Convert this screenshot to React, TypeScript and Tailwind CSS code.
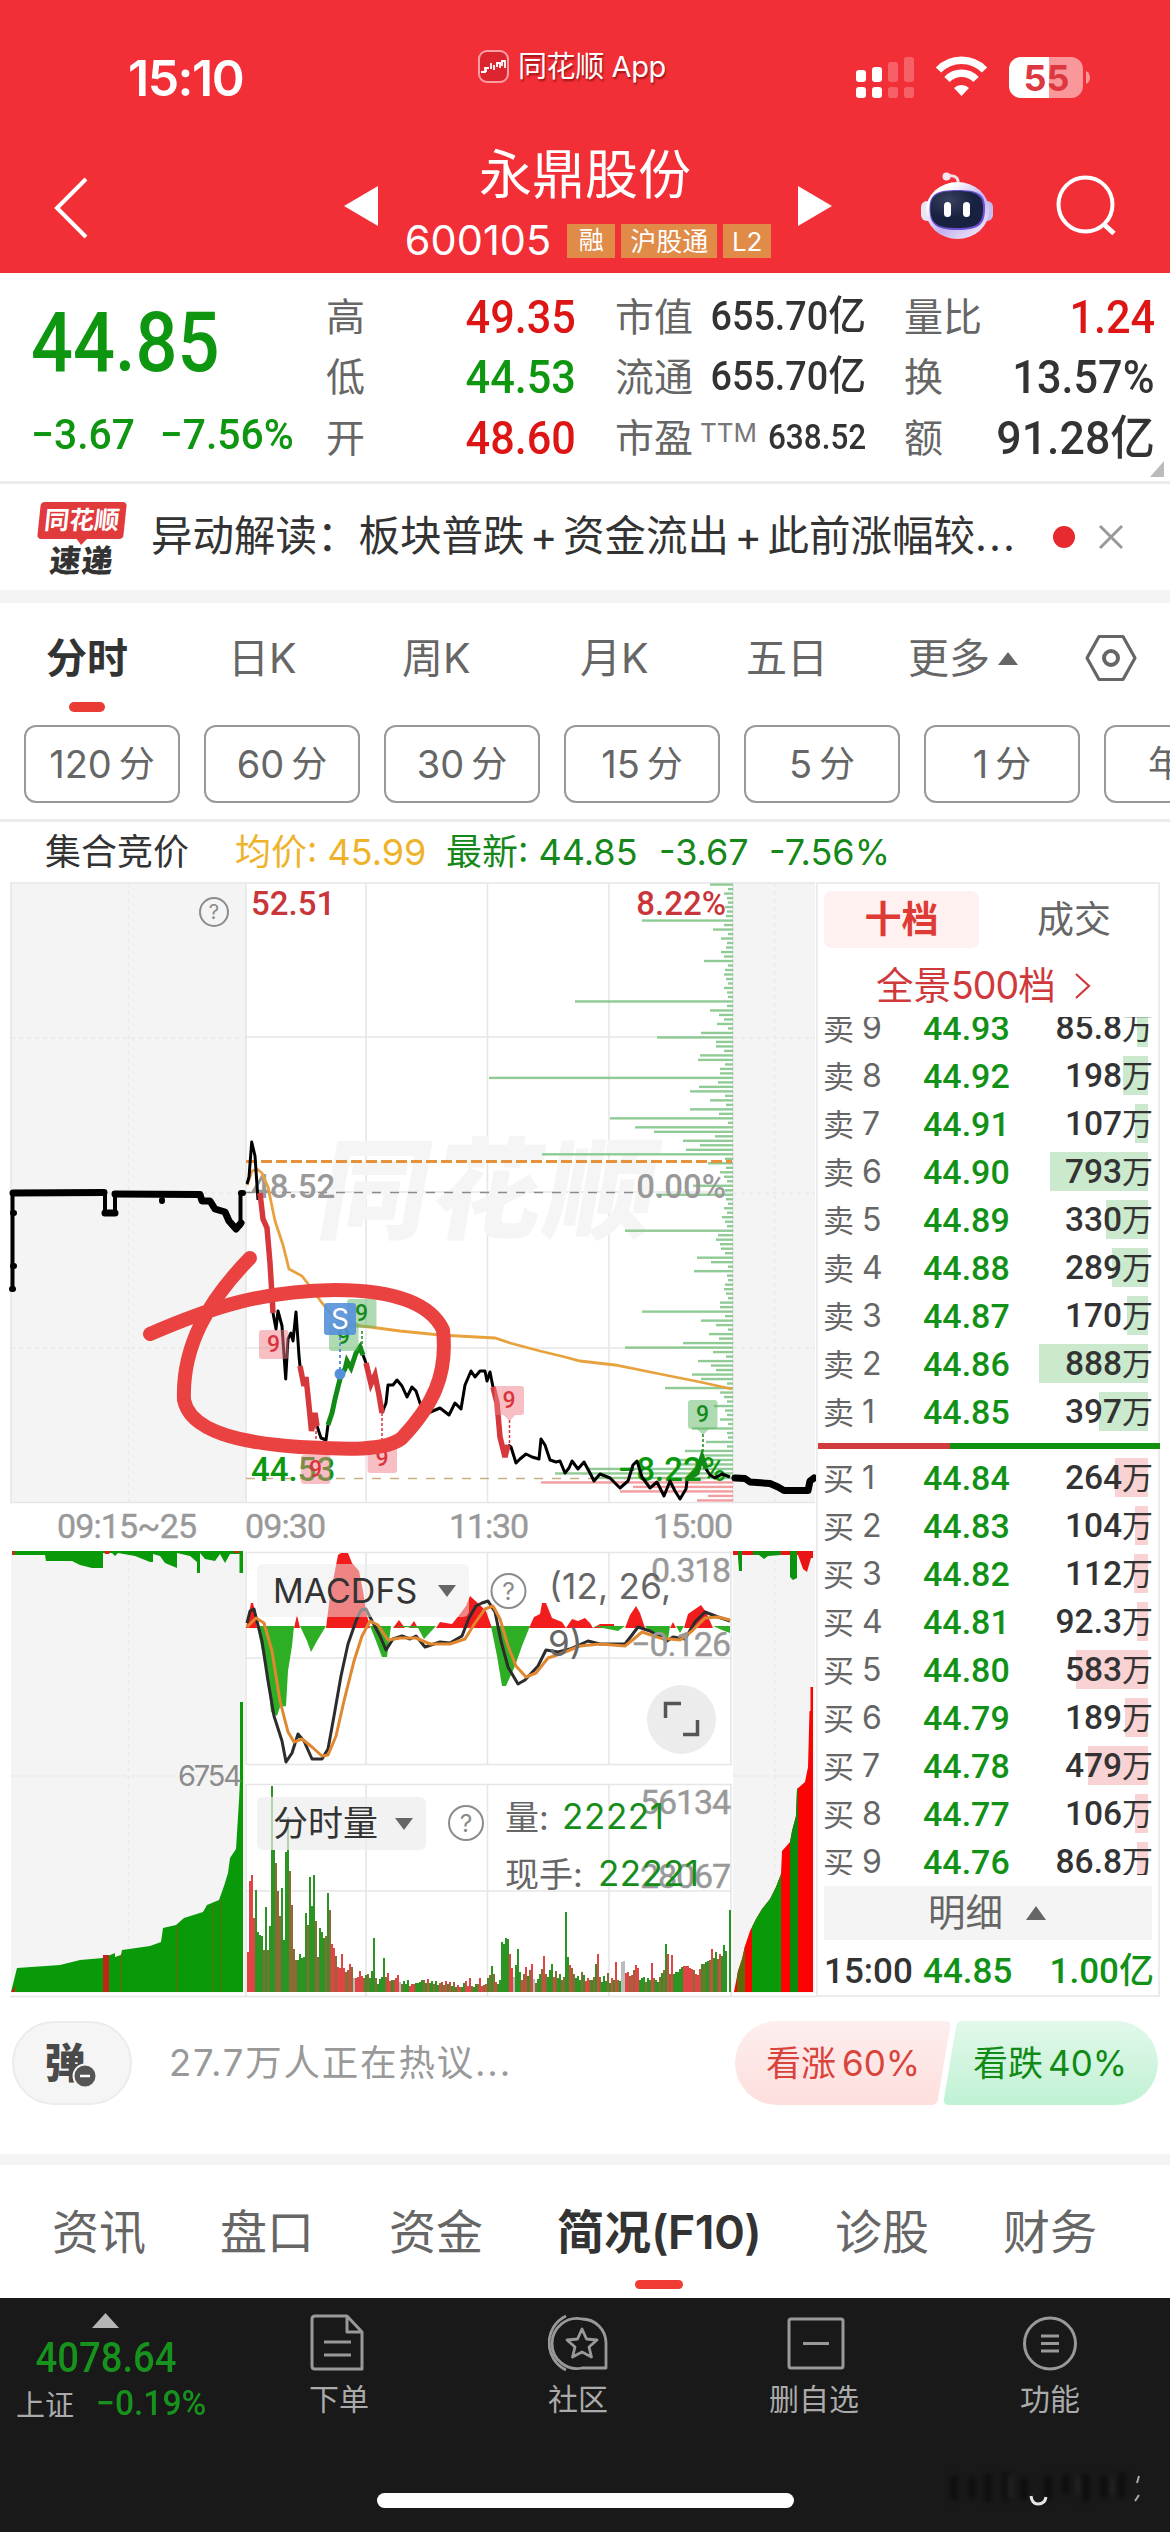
import React from 'react';

const NUM = "font-['Roboto','Noto_Sans_CJK_SC',sans-serif] font-medium";

type Level = { label: string; n: number; price: string; vol: string; bar: number };

const SELLS: Level[] = [
  { label: '卖', n: 9, price: '44.93', vol: '85.8万', bar: 11 },
  { label: '卖', n: 8, price: '44.92', vol: '198万', bar: 25 },
  { label: '卖', n: 7, price: '44.91', vol: '107万', bar: 13 },
  { label: '卖', n: 6, price: '44.90', vol: '793万', bar: 98 },
  { label: '卖', n: 5, price: '44.89', vol: '330万', bar: 42 },
  { label: '卖', n: 4, price: '44.88', vol: '289万', bar: 36 },
  { label: '卖', n: 3, price: '44.87', vol: '170万', bar: 21 },
  { label: '卖', n: 2, price: '44.86', vol: '888万', bar: 109 },
  { label: '卖', n: 1, price: '44.85', vol: '397万', bar: 49 },
];

const BUYS: Level[] = [
  { label: '买', n: 1, price: '44.84', vol: '264万', bar: 33 },
  { label: '买', n: 2, price: '44.83', vol: '104万', bar: 13 },
  { label: '买', n: 3, price: '44.82', vol: '112万', bar: 14 },
  { label: '买', n: 4, price: '44.81', vol: '92.3万', bar: 11 },
  { label: '买', n: 5, price: '44.80', vol: '583万', bar: 72 },
  { label: '买', n: 6, price: '44.79', vol: '189万', bar: 23 },
  { label: '买', n: 7, price: '44.78', vol: '479万', bar: 60 },
  { label: '买', n: 8, price: '44.77', vol: '106万', bar: 13 },
  { label: '买', n: 9, price: '44.76', vol: '86.8万', bar: 11 },
];

// volume profile, row index -> bar length
const PROFILE: Record<number, number> = {
  0: 23, 8: 91, 10: 20, 12: 12, 15: 12, 17: 29, 20: 9, 26: 158, 28: 23, 29: 14, 31: 16, 33: 32, 34: 76,
  35: 17, 36: 17, 38: 33, 39: 35, 41: 13, 42: 13, 43: 244, 44: 15, 45: 34, 46: 43, 48: 23, 50: 43, 51: 14,
  52: 123, 54: 98, 55: 79, 56: 18, 57: 50, 58: 33, 59: 47, 60: 191, 62: 25, 64: 13, 67: 40, 69: 77, 74: 11,
  77: 108, 78: 15, 79: 17, 80: 13, 81: 12, 83: 36, 84: 22, 86: 39, 90: 9, 93: 13, 94: 13, 95: 91, 97: 32,
  98: 17, 100: 24, 101: 14, 102: 50, 103: 108, 104: 20, 106: 35, 107: 22, 108: 17, 109: 41, 110: 32,
  112: 68, 113: 13, 116: 19, 119: 13, 121: 41, 124: 27, 126: 48, 127: 30, 128: 60, 129: 57, 130: 147,
  131: 178, 132: 140, 133: 192, 134: 100, 135: 113, 136: 25, 137: 36,
};
const SMALL = [7, 5, 9, 6, 5, 8, 6];

// one entry per minute: height + colour (r red, g green, m mixed, w grey)
const VOLUME = (
  '40r 111r 117r 74r 102g 60g 57g 56g 42m 85g 42m 66g 206g 142g 129m 101m 76m 104g 52g 140g 175g 121m 87m 43m 32m 32g 38g 34g 35g ' +
  '79g 67m 115g 86g 117g 71m 35m 64g 60g 54g 56m 99g 82m 48r 44r 36m 25r 24r 38r 24r 20m 22m 28r 25m 14w 14r 15r 21r 16r 14m 17g ' +
  '18m 14g 21g 54g 14m 8g 13g 15g 34g 15m 19r 11r 12g 12m 14r 17r 10w 8m 11g 8g 12g 6r 8r 8r 9g 9g 10g 12g 12m 9g 13r 9g 11g 8m 11g ' +
  '7g 9r 10m 7m 11r 8g 10r 6g 10m 5g 7r 5r 5g 9g 11r 6r 14r 6m 5g 8g 8m 14r 6r 7m 8r 14g 17m 26g 18m 10r 8g 12g 50g 48g 54g 53g 38r ' +
  '24r 15w 27g 43g 20g 12r 18m 25r 16g 22m 28r 13w 9m 13g 18g 23m 36r 18m 15g 22g 28g 15r 21m 14g 18g 12m 15m 80g 35g 27r 24m 18m ' +
  '14g 16g 12g 20m 17g 11r 14r 12m 12g 15m 28g 38r 15m 10g 16g 11g 19m 9g 14r 12g 30r 12m 11g 30w 31w 19r 20r 16m 17r 22m 27r 24r ' +
  '12g 14g 15g 10m 14g 12g 29r 14m 12g 10g 15m 19g 22m 48g 38r 18m 37r 18g 20g 20g 23g 25g 26r 26r 26r 24r 23r 22m 18r 17r 23r 28g ' +
  '28m 30g 31g 32m 43r 34g 40g 33m 38r 36g 47g 41g'
).split(' ');

const VOL_COLOR: Record<string, string> = { r: '#df4545', g: '#2b9422', m: '#8b6a35', w: '#bbbbbb' };

const Tri = ({ up = false, color = '#666', w = 18, h = 12 }: { up?: boolean; color?: string; w?: number; h?: number }) => (
  <svg width={w} height={h} viewBox="0 0 18 12" preserveAspectRatio="none">
    <path d={up ? 'M9 0L18 12H0Z' : 'M0 0H18L9 12Z'} fill={color} />
  </svg>
);

const Help = ({ cx, cy, r }: { cx: number; cy: number; r: number }) => (
  <g>
    <circle cx={cx} cy={cy} r={r} fill="none" stroke="#8c8c8c" strokeWidth="2" />
    <text x={cx} y={cy + r * 0.52} textAnchor="middle" fontSize={r * 1.45} fill="#8c8c8c" fontFamily="Inter">?</text>
  </g>
);

const Flag = ({ x, y, green = false, tail }: { x: number; y: number; green?: boolean; tail?: number }) => (
  <g>
    <rect x={x} y={y} width="29.5" height="29" rx="3" fill={green ? '#5fb865' : '#f08088'} opacity="0.5" />
    {tail && <path d={`M${x + 9} ${y + 29}h12l-6 6z`} fill={green ? '#5fb865' : '#f08088'} opacity="0.5" />}
    <text x={x + 14.5} y={y + 22} textAnchor="middle" fontSize="23" fontWeight="500" fill={green ? '#168a1c' : '#d9333c'} fontFamily="Roboto">9</text>
    {tail && <path d={`M${x + 15} ${y + 34}V${tail}`} stroke={green ? '#168a1c' : '#d9333c'} strokeWidth="1.5" strokeDasharray="3 2" />}
  </g>
);

const Header = () => (
  <header className="flex h-[273px] flex-col bg-[#f22f37] text-white">
    <div className="flex h-[140px] items-start pl-[128px] pr-[80px]">
      <div className="mt-[51px] w-[350px] text-[50px] font-semibold leading-[54px] tracking-[-1.5px]">15:10</div>
      <div className="mt-[50px] flex items-center gap-[9px]">
        <svg width="31" height="34" viewBox="0 0 31 34">
          <rect x="1" y="1" width="29" height="31" rx="8" fill="#dd2530" stroke="#ff9ea2" strokeWidth="2" />
          <path d="M3 22h4v-5M8 22v-4h3M13 19v-6M16 20v-5M19 17v-4h3v5M24 16v-5h3v7" stroke="#fff" strokeWidth="1.8" fill="none" />
        </svg>
        <span className="text-[29px] leading-[34px] tracking-[-0.4px] [text-shadow:1px_2px_2px_rgba(90,0,0,.6)]">同花顺 App</span>
      </div>
      <svg className="ml-auto mt-[55px]" width="236" height="46" viewBox="0 0 236 46">
        <g fill="#fff">
          <rect x="2" y="15" width="10" height="12" rx="3" />
          <rect x="18" y="12" width="10" height="15" rx="3" />
          <rect x="2" y="32" width="10" height="11" rx="3" />
          <rect x="18" y="32" width="10" height="11" rx="3" />
          <g opacity="0.24">
            <rect x="34" y="7" width="10" height="20" rx="3" />
            <rect x="50" y="2" width="10" height="25" rx="3" />
            <rect x="34" y="32" width="10" height="11" rx="3" />
            <rect x="50" y="32" width="10" height="11" rx="3" />
          </g>
        </g>
        <g fill="none" stroke="#fff" strokeWidth="7.5">
          <path d="M84.500 15a32 32 0 0 1 46 0" />
          <path d="M93 24.500a20 20 0 0 1 29 0" />
        </g>
        <path d="M100 33a11 11 0 0 1 15 0L107.500 41z" fill="#fff" />
        <path d="M167 2h28v41h-28a12 12 0 0 1-12-12V14a12 12 0 0 1 12-12z" fill="#fff" />
        <path d="M195 2h22a12 12 0 0 1 12 12v17a12 12 0 0 1-12 12h-22z" fill="#fff" opacity="0.5" />
        <path d="M232 16c3 1.500 4 4 4 6.500s-1 5-4 6.500z" fill="#fff" opacity="0.5" />
        <text x="192.500" y="35.500" textAnchor="middle" fontSize="36" fontWeight="700" fill="#dd3740" fontFamily="Inter">55</text>
      </svg>
    </div>
    <div className="flex h-[133px] items-start">
      <svg className="ml-[53px] mt-[36px]" width="36" height="64" viewBox="0 0 36 64">
        <path d="M33 3L4 32L33 61" fill="none" stroke="#fff" strokeWidth="4" />
      </svg>
      <svg className="ml-[255px] mt-[46px]" width="34" height="40" viewBox="0 0 34 40"><path d="M0 20L34 0V40Z" fill="#fff" /></svg>
      <div className="flex w-[420px] flex-col items-center pr-[6px]">
        <div className="mt-[6px] text-[53px] leading-[58px]">永鼎股份</div>
        <div className="mt-[18px] flex h-[38px] items-center gap-[6px] pl-[6px]">
          <span className="mr-[10px] text-[41.5px] leading-none">600105</span>
          <span className="flex h-[34px] w-[48px] items-center justify-center bg-[#e08b48] text-[25px]">融</span>
          <span className="flex h-[34px] w-[96px] items-center justify-center bg-[#e08b48] text-[26px]">沪股通</span>
          <span className="flex h-[34px] w-[48px] items-center justify-center bg-[#e08b48] text-[26px]">L2</span>
        </div>
      </div>
      <svg className="mt-[46px]" width="34" height="40" viewBox="0 0 34 40"><path d="M34 20L0 0V40Z" fill="#fff" /></svg>
      <svg className="ml-[88px] mt-[30px]" width="76" height="72" viewBox="0 0 76 72">
        <defs>
          <linearGradient id="bot" x1="0" y1="0.1" x2="0.8" y2="1">
            <stop offset="0.2" stopColor="#fff" />
            <stop offset="0.6" stopColor="#c3b2f0" />
            <stop offset="1" stopColor="#efe6f8" />
          </linearGradient>
          <radialGradient id="visor" cx="0.35" cy="0.25" r="0.8">
            <stop offset="0" stopColor="#39415f" />
            <stop offset="0.6" stopColor="#18213f" />
          </radialGradient>
        </defs>
        <path d="M38 14C39 7 34 5 28 6" fill="none" stroke="#f0dbe8" strokeWidth="3" />
        <circle cx="26.500" cy="6.500" r="4" fill="#f6e4ee" />
        <rect x="1" y="31" width="12" height="20" rx="6" fill="#eae4f7" />
        <rect x="61" y="31" width="12" height="20" rx="6" fill="#c8bbef" />
        <ellipse cx="37.500" cy="40.500" rx="31.500" ry="28.500" fill="url(#bot)" />
        <path d="M37.500 20C58 20 65 24 65 38C65 54 60 60 37.500 60C15 60 9.500 54 9.500 38C9.500 24 17 20 37.500 20Z" fill="#6a4fd0" />
        <path d="M37 21C56 21 63 25 63 38C63 53 58 58 37 58C16 58 10.500 53 10.500 38C10.500 25 18 21 37 21Z" fill="url(#visor)" />
        <rect x="24" y="32" width="7" height="15" rx="3.500" fill="#fff" />
        <rect x="43" y="32" width="7" height="15" rx="3.500" fill="#fff" />
      </svg>
      <svg className="ml-[59px] mt-[34px]" width="66" height="66" viewBox="0 0 66 66">
        <circle cx="30.500" cy="30.500" r="27" fill="none" stroke="#fff" strokeWidth="4" />
        <path d="M48 49.500L59 59.500" stroke="#fff" strokeWidth="5" />
      </svg>
    </div>
  </header>
);

const Label = ({ children }: { children: React.ReactNode }) => <span className="text-[39px] text-[#666]">{children}</span>;

const Quote = () => (
  <section className="relative flex h-[211px] border-b-[3px] border-[#ececec] pt-[13px] leading-none">
    <div className="w-[326px] pl-[31px] text-[#0f9610]">
      <div className={`${NUM} mt-[15px] h-[84px] w-[200px] origin-left scale-x-[0.88] text-[84px]`}>44.85</div>
      <div className={`${NUM} mt-[29px] flex w-[300px] origin-left scale-x-[0.96] gap-[26px] whitespace-nowrap text-[42.5px]`}>
        <span>−3.67</span>
        <span>−7.56%</span>
      </div>
    </div>
    <div className="grid h-[182px] w-[250px] grid-rows-3 items-center">
      <div className="flex items-center justify-between"><Label>高</Label><span className={`${NUM} origin-right scale-x-[0.92] text-[47px] text-[#dd1515]`}>49.35</span></div>
      <div className="flex items-center justify-between"><Label>低</Label><span className={`${NUM} origin-right scale-x-[0.92] text-[47px] text-[#0f9610]`}>44.53</span></div>
      <div className="flex items-center justify-between"><Label>开</Label><span className={`${NUM} origin-right scale-x-[0.92] text-[47px] text-[#dd1515]`}>48.60</span></div>
    </div>
    <div className="ml-[39px] grid h-[182px] w-[251px] grid-rows-3 items-center whitespace-nowrap text-[#333]">
      <div className="flex items-center justify-between"><Label>市值</Label><span className={`${NUM} -ml-4 origin-right scale-x-[0.92] text-[41px]`}>655.70亿</span></div>
      <div className="flex items-center justify-between"><Label>流通</Label><span className={`${NUM} -ml-4 origin-right scale-x-[0.92] text-[41px]`}>655.70亿</span></div>
      <div className="flex items-center justify-between">
        <span className="flex items-start"><Label>市盈</Label><span className="ml-[7px] mt-[2px] text-[26px] text-[#777]">TTM</span></span>
        <span className={`${NUM} -ml-4 origin-right scale-x-[0.9] text-[35px]`}>638.52</span>
      </div>
    </div>
    <div className="ml-[38px] grid h-[182px] w-[251px] grid-rows-3 items-center whitespace-nowrap text-[#333]">
      <div className="flex items-center justify-between"><Label>量比</Label><span className={`${NUM} origin-right scale-x-[0.92] text-[47px] text-[#dd1515]`}>1.24</span></div>
      <div className="flex items-center justify-between"><Label>换</Label><span className={`${NUM} origin-right scale-x-[0.92] text-[47px]`}>13.57%</span></div>
      <div className="flex items-center justify-between"><Label>额</Label><span className={`${NUM} origin-right scale-x-[0.95] text-[47px]`}>91.28亿</span></div>
    </div>
    <svg className="absolute bottom-[4px] right-[6px]" width="14" height="16" viewBox="0 0 14 16"><path d="M14 0V16H0Z" fill="#bbb" /></svg>
  </section>
);

const News = () => (
  <section className="flex h-[119px] items-center border-b-[13px] border-[#f4f4f4] pl-[37px] leading-none text-[#333]">
    <div className="relative mt-[3px] flex w-[89px] flex-col items-center">
      <div className="flex h-[37px] w-[86px] -skew-x-6 items-center justify-center rounded-[4px] bg-[#e03a3c] text-[25px] font-bold text-white">同花顺</div>
      <svg className="-mt-px" width="12" height="7" viewBox="0 0 12 7"><path d="M0 0H12L5 7Z" fill="#e03a3c" /></svg>
      <div className="-skew-x-6 text-[31px] font-black tracking-[1px]">速递</div>
    </div>
    <div className="ml-[25px] w-[866px] whitespace-nowrap text-[41.5px]">
      异动解读：板块普跌<span className="mx-[5.5px]">+</span>资金流出<span className="mx-[5.5px]">+</span>此前涨幅较<span className="tracking-[2px]">...</span>
    </div>
    <div className="ml-[36px] h-[22px] w-[22px] rounded-full bg-[#e62a30]" />
    <svg className="ml-[23px]" width="26" height="26" viewBox="0 0 26 26"><path d="M2 2L24 24M24 2L2 24" stroke="#999" strokeWidth="3" /></svg>
  </section>
);

const Periods = () => (
  <section className="h-[219px] border-b-[3px] border-[#ececec] leading-none text-[#666]">
    <div className="flex h-[110px] items-center pl-[46px] text-[41px]">
      <div className="relative w-[182px] font-bold text-[#333]">
        分时
        <div className="absolute left-[23px] top-[64px] h-[10px] w-[36px] rounded-full bg-[#ea3b35]" />
      </div>
      <div className="w-[174px]">日K</div>
      <div className="w-[178px]">周K</div>
      <div className="w-[166px]">月K</div>
      <div className="w-[162px]">五日</div>
      <div className="flex w-[176px] items-center gap-[8px]">更多<Tri up w={20} h={13} /></div>
      <svg width="54" height="48" viewBox="0 0 54 48">
        <path d="M15 2.500H39L51 24L39 45.500H15L3 24Z" fill="none" stroke="#666" strokeWidth="3.200" strokeLinejoin="round" />
        <circle cx="27" cy="24" r="7" fill="none" stroke="#666" strokeWidth="4" />
      </svg>
    </div>
    <div className="mt-[12px] flex gap-[24px] overflow-hidden pl-[24px] text-[38px]">
      {['120', '60', '30', '15', '5', '1'].map((n) => (
        <div key={n} className="flex h-[78px] w-[156px] shrink-0 items-center justify-center gap-[7px] rounded-[12px] border-2 border-[#999]">
          <span>{n}</span><span className="text-[36px]">分</span>
        </div>
      ))}
      <div className="flex h-[78px] w-[156px] shrink-0 items-center rounded-[12px] border-2 border-[#999] pl-[42px] text-[36px]">年线</div>
    </div>
  </section>
);

const Summary = () => (
  <div className="flex h-[60px] items-center pl-[45px] text-[36px] leading-none">
    <span className="w-[190px] text-[#333]">集合竞价</span>
    <span className="w-[211px] whitespace-nowrap text-[#eeb32b]">均价: 45.99</span>
    <span className="w-[213px] whitespace-nowrap text-[#16871a]">最新: 44.85</span>
    <span className="w-[110px] whitespace-nowrap text-[#16871a]">-3.67</span>
    <span className="text-[#16871a]">-7.56%</span>
  </div>
);

const Charts = () => (
  <div className="relative h-[1116px] w-[816px] shrink-0">
    <svg className="block" width="816" height="1116" viewBox="0 881 816 1116">
      {/* panes and grid */}
      <g fill="#f4f4f4">
        <rect x="11" y="882" width="235" height="620" />
        <rect x="733" y="882" width="82" height="620" />
        <rect x="11" y="1550" width="234" height="442" />
        <rect x="733" y="1550" width="82" height="442" />
      </g>
      <g fill="none" stroke="#e6e6e6" strokeWidth="1.6">
        <path d="M10 882H815M246 1036H733M246 1191H733M246 1347H733M10 1501.500H815M11 882V1501M246 882V1501M366 882V1501M487.500 882V1501M609 882V1501M733 882V1501" />
        <path d="M246 1551.500H732M246 1657H732M246 1763.500H732M246 1551V1763M366 1551V1763M487.500 1551V1763M609 1551V1763M731 1551V1763" />
        <path d="M246 1783.500H732M246 1890H732M10 1995.500H816M246 1783V1995M366 1783V1995M487.500 1783V1995M609 1783V1995M731 1783V1995" />
      </g>
      <path d="M11 1037H246M11 1192H246M11 1347H246M733 1037H815M733 1192H815M733 1347H815M128.500 882V1501M775 882V1501M11 1775H245M733 1775H815M128.500 1551V1991M775 1551V1991" stroke="#e9e9e9" strokeWidth="1.4" strokeDasharray="4 4" />
      <text x="318" y="1229" fontSize="110" fontWeight="900" fill="#f5f5f5" textLength="336" transform="translate(213 0) skewX(-10)" fontFamily="'Noto Sans CJK SC'">同花顺</text>

      {/* volume by price */}
      {Array.from({ length: 138 }, (_, i) => {
        const len = PROFILE[i] ?? SMALL[i % SMALL.length];
        return <rect key={i} x={733 - len} y={882.400 + i * 4.495} width={len} height="2.4" fill={i > 132 ? '#f08c8f' : '#7cc283'} opacity="0.85" />;
      })}
      <path d="M246 1160.500H732" stroke="#e6913c" strokeWidth="3" strokeDasharray="11 4" />
      <path d="M246 1191.500H640" stroke="#8a8a8a" strokeWidth="1.5" strokeDasharray="9 9" />
      <path d="M246 1477.500H733" stroke="#c9ae84" strokeWidth="1.5" strokeDasharray="9 9" />

      {/* scale labels */}
      <g fontFamily="Roboto" fontSize="33" fontWeight="500">
        <text x="251" y="914" fill="#c93539">52.51</text>
        <text x="726" y="914" fill="#c93539" textAnchor="end">8.22%</text>
        <text x="251" y="1197" fill="#999">48.52</text>
        <text x="726" y="1197" fill="#999" textAnchor="end">0.00%</text>
        <text x="251" y="1480" fill="#0b980e">44.53</text>
        <text x="726" y="1480" fill="#0b980e" textAnchor="end">−8.22%</text>
      </g>
      <g fontFamily="Roboto" fontSize="34" fill="#999" stroke="#999" strokeWidth="0.4">
        <text x="57" y="1537" textLength="140">09:15~25</text>
        <text x="245" y="1537" textLength="81">09:30</text>
        <text x="449" y="1537" textLength="80">11:30</text>
        <text x="653" y="1537" textLength="80">15:00</text>
      </g>
      <Help cx={214} cy={911} r={14} />

      {/* call auction */}
      <g fill="none" stroke="#000" strokeLinejoin="round" strokeLinecap="round">
        <path d="M12.500 1192V1288M105 1192V1212M115 1212V1192M240.500 1225V1193" strokeWidth="4" />
        <path d="M13 1192L104 1191.500M105 1212H115M115 1193L200 1193.500L202 1200L210 1200L215 1208L225 1211L229 1220L236 1228L241 1222" strokeWidth="7" />
        <path d="M13 1212h1M13 1265h1M12 1288h1M162 1199v1M241 1192h2" strokeWidth="6" />
        <path d="M735 1477L745 1477.500L750 1481L770 1482.500L778 1486L784 1489.500H808L810 1480L814 1477" strokeWidth="7" />
      </g>

      {/* average and price */}
      <path d="M247 1184L252 1170L257 1168L262 1172L268 1186L275 1220L283 1244L289 1268L302 1275L312 1288L322 1302L334 1316L345 1323L370 1326L400 1330L440 1334L495 1337L510 1342L540 1350L565 1356L580 1360L615 1364L660 1373L700 1381L732 1388" fill="none" stroke="#e8a23d" strokeWidth="2.800" />
      <g fill="none" stroke="#000" strokeWidth="3" strokeLinejoin="round">
        <path d="M247 1183L249 1176L251.700 1141L255 1155L258 1199" />
        <path d="M273 1312L276 1328L278 1310L282 1325L285.700 1378L288 1338L291 1332L293 1340L296 1311L299 1355L300 1365" />
        <path d="M317 1425L321 1437L326 1439L328 1424M363 1354L366 1362" />
        <path d="M382 1412L386 1402L388 1384L393 1384L397 1379L402 1385L407 1396L412 1386L416 1390L422 1408L428 1412L440 1407L449 1414L455 1402L461 1408L465 1384L471 1370L475 1376L480 1370L485 1370L487 1380L490 1371L493 1386" />
        <path d="M508 1444L511 1446L516 1462L520 1458L526 1453L532 1456L539 1458L541 1438L545 1444L550 1459L556 1461L560 1460L565 1472L569 1467L572 1460L578 1468L584 1461L590 1472L594 1480L600 1473L610 1477L620 1487L628 1480L633 1464L637 1460L642 1476L650 1487L657 1481L664 1495L670 1480L675 1490L680 1498L686 1488L687 1480" />
        <path d="M706 1468L710 1474L715 1477L722 1473L730 1476" />
      </g>
      <path d="M260 1192L263 1218L267 1227L270 1262L272 1294L273 1312M300 1365L304 1385L306 1376L309 1405L311.500 1430L315 1412L317 1425M366 1362L371 1383L375 1374L379 1394L382 1412M493 1386L497 1402L500 1436L505 1456L508 1444" fill="none" stroke="#d7383c" strokeWidth="5.500" />
      <path d="M328 1424L332 1412L335 1398L341 1374L345 1368L347 1360L351 1367L356 1352L360 1346L363 1354M687 1478L697 1472L702 1456L706 1468" fill="none" stroke="#128a16" strokeWidth="5" />

      <Flag x={259} y={1329} />
      <Flag x={301} y={1454} />
      <path d="M316 1425V1454M382 1412V1446" stroke="#d9333c" strokeWidth="1.500" strokeDasharray="3 2" />
      <Flag x={367.500} y={1443} />
      <Flag x={494.500} y={1385} tail={1444} />
      <Flag x={347} y={1298} green />
      <Flag x={329} y={1321} green />
      <Flag x={688} y={1399} green tail={1458} />
      <path d="M362 1330V1346" stroke="#168a1c" strokeWidth="1.500" strokeDasharray="3 2" />
      <rect x="324" y="1302" width="32" height="32" rx="3" fill="#5590da" opacity="0.9" />
      <text x="340" y="1328" textAnchor="middle" fontSize="28" fill="#fff" fontFamily="Inter">S</text>
      <path d="M340 1336V1368" stroke="#5590da" strokeWidth="2" strokeDasharray="3 3" />
      <circle cx="340" cy="1373" r="5.500" fill="#5590da" />

      {/* user's marker */}
      <path d="M150 1333C210 1307 260 1290 335 1289C390 1289 430 1301 443 1329C448 1375 432 1405 402 1437C385 1451 340 1448 300 1446C240 1442 190 1430 184 1399C182 1345 208 1300 250 1257" fill="none" stroke="#ea4241" strokeWidth="14" strokeLinecap="round" strokeLinejoin="round" />

      {/* auction volume, left */}
      <path d="M12 1550V1554L45 1554L46 1560H72L80 1564L92 1567H103V1552H112L115 1555L118 1552L135 1555L150 1561H153V1553L160 1555L165 1562L177 1567V1552L190 1555L197 1561V1572H200V1552L205 1558L215 1560L220 1553L225 1562L230 1553H239.500V1572H243V1550Z" fill="#089a08" />
      <path d="M12 1550h3v4h-3zM104 1550h7l-2 3h-4zM234 1550h5v2h-5z" fill="#c22c18" />
      <path d="M11 1991L17 1967L60 1964L80 1959L103 1957L115 1952V1956L121 1954L122 1949L150 1945L161 1941L163 1927L176 1924L184 1917L203 1911L207 1904L219 1899L224 1885L228 1872L230 1857L236 1848L239 1800L240 1780V1701H243V1991Z" fill="#089a08" />
      <path d="M103 1954h6v37h-6zM11 1991l4-6v6z" fill="#c3241a" />
      <path d="M121.500 1953V1991M177.500 1925V1991M213 1903V1991M220.500 1898V1991" stroke="#6d6410" strokeWidth="1.200" />
      <text x="178" y="1785" fontSize="29" fill="#8c8c8c" fontFamily="Inter" textLength="64">6754</text>

      {/* auction volume, right */}
      <clipPath id="closing">
        <path d="M734 1991L738 1970L742 1958L745 1945L750 1930L756 1918L762 1908L770 1898L776 1886L781 1873L782 1850L790 1841L792 1830L796 1815L797 1788L805 1781L808 1766L809.500 1710H810.500V1686H813V1991Z" />
      </clipPath>
      <g clipPath="url(#closing)">
        <rect x="733" y="1680" width="80" height="312" fill="#fb0303" />
        <rect x="737" y="1680" width="8" height="312" fill="#5d6a08" />
        <rect x="752" y="1680" width="29" height="312" fill="#089a08" />
        <rect x="790" y="1680" width="8" height="312" fill="#0c8a0c" />
      </g>
      <path d="M733 1550H813V1557H811L807 1571L803 1568L798 1554H733Z" fill="#ea1414" />
      <path d="M738 1550h4v20h-3l-1-14zM753 1550H781V1554L768 1555L764 1558L759 1554H753ZM790 1550H797V1577L793 1579L790 1576Z" fill="#0f930f" />

      {/* macd */}
      <path d="M246 1627L249 1612L251 1602H253L256 1615L257 1627ZM294 1627L297 1614L300 1627ZM326 1627L330 1595L338 1554L341 1552H348L352 1562L359 1570L363 1590L366 1610L370 1627ZM393 1627L399 1619L405 1627ZM409 1627L414 1620L418 1627ZM436 1627L440 1621L452 1623L460 1613L466 1605L470 1595L480 1604L486 1610L492 1627ZM529 1627L534 1616L540 1613L542 1602H546L552 1617L562 1621L566 1627L572 1618L578 1620L585 1617L590 1622L593 1627L600 1623H614V1627ZM625 1627L630 1614L636 1605L640 1612L645 1627ZM670 1627L673 1621L676 1627ZM684 1627L688 1613L701 1604L706 1611L713 1627Z" fill="#f31c1c" />
      <path d="M257 1625L262 1650L268 1680L271 1711L277 1715L280 1706L286 1705L288 1670L292 1645L294 1625ZM300 1625L307 1640L311 1651L317 1640L326 1625ZM370 1625L376 1640L382 1656H387L391 1625ZM391 1625H436L424 1638L418 1627ZM491 1625L497 1655L502 1685H506L515 1665L522 1645L530 1625ZM593 1625H625L618 1630ZM645 1625H670L668 1638L655 1636ZM676 1625H684L680 1632ZM713 1625H730V1632L722 1629Z" fill="#2eae24" />
      <path d="M247 1622L250 1610L254 1608L262 1640L268 1680L274 1715L282 1740L286 1761L292 1752L298 1733L304 1740L312 1758H322L328 1748L334 1715L341 1675L348 1643L356 1620L361 1609L366 1608L372 1620L380 1635L386 1649L393 1638L402 1635L410 1638L416 1635L425 1646L440 1641L450 1642L462 1635L469 1617L476 1605L482 1602L488 1600L495 1611L501 1640L508 1666L518 1683L525 1679L538 1665L546 1649L558 1651L570 1648L588 1640L600 1643H625L632 1634L638 1626L650 1630L667 1640L673 1636L685 1638L695 1621L705 1611L718 1616L730 1620" fill="none" stroke="#2c2c2c" strokeWidth="3" strokeLinejoin="round" />
      <path d="M247 1626L256 1617L264 1622L272 1650L280 1700L288 1731L294 1741L302 1738L312 1746L322 1755L328 1754L336 1735L344 1700L354 1660L362 1635L370 1620L378 1624L388 1639L400 1637L416 1637L430 1643L450 1643L465 1638L475 1622L485 1608L493 1605L500 1618L508 1645L516 1665L526 1676L536 1672L548 1657L560 1653L580 1645L600 1643L625 1645L635 1637L642 1631L660 1637L680 1639L692 1630L705 1617L718 1616L730 1619" fill="none" stroke="#e0872f" strokeWidth="3" strokeLinejoin="round" />

      {/* minute volume */}
      {VOLUME.map((v, i) => {
        const h = parseInt(v, 10);
        return <rect key={i} x={247 + i * 2} y={1991 - h} width="2" height={h} fill={VOL_COLOR[v.slice(-1)]} />;
      })}
      <rect x="729" y="1909" width="2" height="82" fill="#2b9422" />

      <g fontFamily="Roboto" fontSize="34" fill="#999" stroke="#999" strokeWidth="0.4" textAnchor="end">
        <text x="731" y="1581" textLength="80">0.318</text>
        <text x="731" y="1655" textLength="100">−0.126</text>
        <text x="731" y="1813" textLength="91">56134</text>
        <text x="731" y="1887" textLength="91">28067</text>
      </g>
      <Help cx={508.500} cy={1590} r={17} />
      <Help cx={466} cy={1822} r={17} />
      <circle cx="681.500" cy="1718.500" r="34.500" fill="#ececec" />
      <path d="M665.500 1717V1702.500H681M683 1733.500H697.500V1719" fill="none" stroke="#555" strokeWidth="3.500" />
      <g fontFamily="Inter, 'Noto Sans CJK SC'" fontSize="35" fill="#666">
        <text x="549" y="1598" textLength="122">(12, 26,</text>
        <text x="548" y="1655">9)</text>
        <text x="505" y="1829" fontSize="34">量:</text>
        <text x="505" y="1886" fontSize="34">现手:</text>
        <text x="562" y="1828" fill="#168d1b" textLength="102">22221</text>
        <text x="598" y="1885" fill="#168d1b" textLength="101">22221</text>
      </g>
    </svg>
    <div className="absolute left-[257px] top-[682px] flex h-[53px] w-[212px] items-center rounded-[6px] bg-[#ececec]/50 pl-[16px] text-[34px] leading-none text-[#333]">
      <span className="w-[165px]">MACDFS</span>
      <Tri />
    </div>
    <div className="absolute left-[257px] top-[915px] flex h-[53px] w-[169px] items-center rounded-[6px] bg-[#ececec]/70 pl-[16px] text-[35px] leading-none text-[#333]">
      <span className="w-[122px]">分时量</span>
      <Tri />
    </div>
  </div>
);

const Row = ({ level, color }: { level: Level; color: string }) => (
  <div className="relative flex h-[48px] shrink-0 items-center pl-[5px] pr-[5px]">
    <div className={`absolute right-[10px] top-[4px] h-[39px] ${color}`} style={{ width: level.bar }} />
    <span className="relative w-[39px] text-[31px] text-[#666]">{level.label}</span>
    <span className="relative w-[61px] text-[32px] text-[#666]">{level.n}</span>
    <span className={`${NUM} relative text-[34px] text-[#119217]`}>{level.price}</span>
    <span className={`${NUM} relative ml-auto text-[33.5px] text-[#333]`}>{level.vol.slice(0, -1)}<span className="text-[31px] font-normal">万</span></span>
  </div>
);

const OrderBook = () => (
  <div className="flex h-[1115px] w-[344px] flex-col border-2 border-[#ececec] leading-none">
    <div className="flex h-[70px] items-center pl-[6px] text-[37px]">
      <div className="flex h-[57px] w-[155px] items-center justify-center rounded-[8px] bg-[#fef1f0] font-bold text-[#de3b36]">十档</div>
      <div className="ml-[58px] text-[#666]">成交</div>
    </div>
    <div className="flex h-[63px] items-center pl-[58px] text-[37.5px] text-[#d0393c]">
      全景<span className="tracking-[-1px]">500</span>档
      <svg className="ml-[18px]" width="17" height="28" viewBox="0 0 17 28"><path d="M2 2L15 14L2 26" fill="none" stroke="#d0393c" strokeWidth="2.200" /></svg>
    </div>
    <div className="flex h-[422px] flex-col justify-end overflow-hidden pb-[3px]">
      {SELLS.map((l) => <Row key={l.n} level={l} color="bg-[#cbe9cc]" />)}
    </div>
    <div className="-mr-[2px] mt-[4px] flex h-[6px] shrink-0">
      <div className="w-[132px] bg-[#d03b3d]" />
      <div className="flex-1 bg-[#10920f]" />
    </div>
    <div className="mt-[5px] flex h-[421px] flex-col overflow-hidden">
      {BUYS.map((l) => <Row key={l.n} level={l} color="bg-[#f9d3d4]" />)}
    </div>
    <div className="mx-[6px] mt-[11px] flex h-[54px] items-center justify-center gap-[23px] bg-[#f4f4f4] pr-[2px] text-[37.5px] text-[#666]">
      明细<Tri up w={20} h={14} />
    </div>
    <div className={`${NUM} flex flex-1 items-center whitespace-nowrap pl-[6px] pr-[4px] pt-[7px] text-[35px] text-[#119217]`}>
      <span className="w-[99px] text-[#333]">15:00</span>
      <span>44.85</span>
      <span className="ml-auto">1.00亿</span>
    </div>
  </div>
);

const Discuss = () => (
  <section className="flex h-[168px] items-start border-b-[11px] border-[#f4f4f4] pl-[12px] pt-[24px] leading-none">
    <div className="relative flex h-[84px] w-[120px] items-center justify-center rounded-full border-2 border-[#ececec] bg-[#f5f5f5] text-[41px] font-black text-[#4a4a4a]">
      <span className="-ml-[14px]">弹</span>
      <svg className="absolute left-[58px] top-[40px]" width="26" height="26" viewBox="0 0 26 26">
        <circle cx="13" cy="13" r="11.500" fill="#555" stroke="#f5f5f5" strokeWidth="2" />
        <path d="M8 13H18" stroke="#fff" strokeWidth="2.500" />
      </svg>
    </div>
    <div className="ml-[37px] flex h-[84px] w-[566px] items-center text-[36.5px] tracking-[1.8px] text-[#999]">27.7万人正在热议...</div>
    <div className="relative flex h-[84px] w-[423px] items-center text-[35px]">
      <svg className="absolute inset-0" width="423" height="84" viewBox="0 0 423 84">
        <defs>
          <linearGradient id="up" x1="0" y1="0" x2="0" y2="1"><stop offset="0" stopColor="#fdeeee" /><stop offset="1" stopColor="#fddfdd" /></linearGradient>
          <linearGradient id="down" x1="0" y1="0" x2="0" y2="1"><stop offset="0" stopColor="#e2f8ea" /><stop offset="1" stopColor="#c0f2d4" /></linearGradient>
        </defs>
        <path d="M42 0H210Q216 0 215 6L203 78Q202 84 196 84H42A42 42 0 0 1 42 0Z" fill="url(#up)" />
        <path d="M381 0H228Q222 0 221 6L209 78Q208 84 214 84H381A42 42 0 0 0 381 0Z" fill="url(#down)" />
      </svg>
      <span className="relative ml-[31px] w-[207px] whitespace-nowrap text-[#d9433c]">看涨<span className="ml-[6px]">60%</span></span>
      <span className="relative whitespace-nowrap text-[#128a16]">看跌<span className="ml-[5px]">40%</span></span>
    </div>
  </section>
);

const Tabs = () => (
  <nav className="flex h-[133px] items-center pl-[52px] text-[47px] leading-none text-[#666]">
    <div className="w-[168px]">资讯</div>
    <div className="w-[169px]">盘口</div>
    <div className="w-[168px]">资金</div>
    <div className="relative w-[278px] whitespace-nowrap font-semibold text-[#333]">
      简况<span className="tracking-[-0.7px]">(F10)</span>
      <div className="absolute left-[78px] top-[72px] h-[9px] w-[48px] rounded-full bg-[#f03c32]" />
    </div>
    <div className="w-[168px]">诊股</div>
    <div>财务</div>
  </nav>
);

const BottomBar = () => (
  <footer className="relative h-[234px] bg-[#191919] leading-none text-[#aaa]">
    <div className="flex h-[150px]">
      <div className="w-[220px] pt-[15px]">
        <div className="flex h-[15px] pl-[92px]"><Tri up color="#b5b5b5" w={27} h={15} /></div>
        <div className={`${NUM} mt-[9px] origin-left scale-x-[0.91] pl-[39px] text-[42px] text-[#17921d]`}>4078.64</div>
        <div className="mt-[7px] flex items-center whitespace-nowrap pl-[16px] text-[29px]">
          <span className="w-[80px] pt-[4px]">上证</span>
          <span className={`${NUM} origin-left scale-x-[0.96] text-[35px] text-[#17921d]`}>−0.19%</span>
        </div>
      </div>
      <div className="flex w-[238px] flex-col items-center gap-[12px] pt-[16px] text-[30px]">
        <svg className="-ml-[3px]" width="56" height="58" viewBox="0 0 56 58" fill="none" stroke="#999" strokeWidth="3" strokeLinejoin="round">
          <path d="M5 2H37L52 18V55H5Q2 55 2 52V5Q2 2 5 2ZM37 2V18H52M14 28H41M14 41H41" />
        </svg>
        <span>下单</span>
      </div>
      <div className="flex w-[240px] flex-col items-center gap-[12px] pt-[16px] text-[30px]">
        <svg width="60" height="58" viewBox="0 0 60 58" fill="none" stroke="#999" strokeWidth="2.800" strokeLinejoin="round">
          <path d="M18 2A30 30 0 0 0 18 56M34 5A25 25 0 1 0 34 54H58V29A24 24 0 0 0 34 5Z" />
          <path d="M34 15L38.500 25L49 26L41 33L43.500 43L34 38L24.500 43L27 33L19 26L29.500 25Z" />
        </svg>
        <span>社区</span>
      </div>
      <div className="flex w-[232px] flex-col items-center gap-[12px] pt-[16px] text-[30px]">
        <svg className="ml-[4px]" width="58" height="58" viewBox="0 0 58 58" fill="none" stroke="#999" strokeWidth="3">
          <rect x="2" y="5" width="54" height="49" rx="2" />
          <path d="M16 29.500H42" />
        </svg>
        <span>删自选</span>
      </div>
      <div className="flex w-[240px] flex-col items-center gap-[12px] pt-[16px] text-[30px]">
        <svg width="58" height="58" viewBox="0 0 58 58" fill="none" stroke="#999" strokeWidth="3">
          <circle cx="29" cy="29.500" r="25.500" />
          <path d="M20 22H38M20 29.500H38M20 37H38" />
        </svg>
        <span>功能</span>
      </div>
    </div>
    <div className="mx-auto mt-[45px] h-[15px] w-[417px] rounded-full bg-white" />
    <svg className="absolute bottom-[20px] right-[26px]" width="200" height="48" viewBox="0 0 200 48" fill="none">
      <g className="blur-[2px]">
        <path d="M10 12V36M28 14V34M44 10V38M62 8V38M80 14V36M104 12V36M122 10V30M142 10V38M160 12V34M178 8V34" stroke="#0f0f0f" strokeWidth="8" />
        <path d="M66 12V34M134 14V30M168 14V30" stroke="#242424" strokeWidth="4" />
      </g>
      <path d="M87 32Q88 40 94 40Q101 40 102 33" stroke="#e6e6e6" strokeWidth="3" />
      <path d="M195 12L193 19M195 31L191 37" stroke="#aaa" strokeWidth="2" />
    </svg>
  </footer>
);

const App: React.FC = () => {
  return (
    <div className="h-[2532px] w-[1170px] overflow-hidden bg-white font-['Inter','Noto_Sans_CJK_SC',sans-serif]">
      <Header />
      <Quote />
      <News />
      <Periods />
      <Summary />
      <div className="flex h-[1115px]">
        <Charts />
        <OrderBook />
      </div>
      <Discuss />
      <Tabs />
      <BottomBar />
    </div>
  );
};

export default App;
